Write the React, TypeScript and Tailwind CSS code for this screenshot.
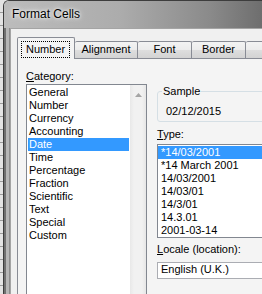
const categories = [
  "General",
  "Number",
  "Currency",
  "Accounting",
  "Date",
  "Time",
  "Percentage",
  "Fraction",
  "Scientific",
  "Text",
  "Special",
  "Custom",
];

const types = [
  "*14/03/2001",
  "*14 March 2001",
  "14/03/2001",
  "14/03/01",
  "14/3/01",
  "14.3.01",
  "2001-03-14",
];

function Tab({ label, w }: { label?: string; w: string }) {
  return (
    <div
      className={`${w} h-[17px] shrink-0 border-t border-r border-[#898c95] rounded-t-[2px] bg-[linear-gradient(#f3f3f3_0%,#ececec_50%,#dedede_50%,#d3d3d3_100%)] pt-[1px] text-center`}
    >
      {label}
    </div>
  );
}

export default function App() {
  return (
    <div className="w-[262px] h-[294px] overflow-hidden flex bg-[#e4e4e4] font-['Liberation_Sans',Arial,sans-serif] text-[11px] leading-[13px] text-black">
      {/* spreadsheet peeking out on the left */}
      <div className="w-[3px] shrink-0 bg-[repeating-linear-gradient(to_bottom,#e3e3e3_0px,#e3e3e3_12px,#9a9a9a_12px,#9a9a9a_13px)]" />

      <div className="flex-1 min-w-0 flex flex-col border-l border-t border-[#3d3d3d] rounded-tl-[6px] overflow-hidden">
        {/* title bar */}
        <div className="h-[27px] shrink-0 pl-[8px] pt-[5px] bg-[linear-gradient(to_right,#bcbcbc_0%,#acacac_45%,#8a8a8a_80%,#6e6e6e_100%)]">
          <span className="text-[12px] leading-[16px] [text-shadow:0_0_6px_#fff,0_0_3px_#fff]">
            Format Cells
          </span>
        </div>

        <div className="flex-1 flex min-h-0">
          {/* window frame */}
          <div className="w-[2px] shrink-0 bg-[#707070]" />
          <div className="w-[3px] shrink-0 bg-[#b6b6b6]" />
          <div className="w-[1px] shrink-0 bg-[#8c8c8c]" />

          {/* client area */}
          <div className="flex-1 min-w-0 border-l border-t border-[#a4a4a4] bg-[#f0f0f0] pt-[8px] pl-[6px] flex flex-col">
            {/* tabs */}
            <div className="flex items-end h-[21px] shrink-0">
              <div className="relative z-10 w-[58px] h-[22px] -mb-px shrink-0 border-l border-t border-r border-[#898c95] rounded-t-[2px] bg-[#f4f4f4] pt-[3px] pl-[3px]">
                <div className="w-[49px] border border-dotted border-black py-[1px] text-center">
                  Number
                </div>
              </div>
              <Tab label="Alignment" w="w-[63px]" />
              <Tab label="Font" w="w-[54px]" />
              <Tab label="Border" w="w-[54px]" />
              <Tab w="w-[60px]" />
            </div>

            {/* tab page */}
            <div className="flex-1 border-t border-l border-[#898c95] bg-[#f4f4f4] pl-[8px] flex gap-[10px]">
              {/* category column */}
              <div className="w-[121px] shrink-0 flex flex-col pt-[11px]">
                <div>
                  <span className="underline">C</span>ategory:
                </div>
                <div className="mt-[1px] h-[260px] flex border border-[#828790] bg-white">
                  <div className="flex-1 p-[1px]">
                    {categories.map((c) => (
                      <div
                        key={c}
                        className={`h-[13px] pl-[1px] ${c === "Date" ? "bg-[#3399ff] text-white" : ""}`}
                      >
                        {c}
                      </div>
                    ))}
                  </div>
                  <div className="w-[16px] shrink-0 bg-[linear-gradient(to_right,#e8e8e8,#f1f1f1_25%,#f1f1f1_75%,#e6e6e6)] flex justify-center pt-[8px]">
                    <svg width="7" height="4" viewBox="0 0 7 4">
                      <polygon points="0,4 3.5,0 7,4" fill="#a5a5a5" />
                    </svg>
                  </div>
                </div>
              </div>

              {/* right column */}
              <div className="w-[150px] shrink-0 flex flex-col pt-[32px]">
                <div className="relative h-[31px] border border-[#d5dfe5] rounded-[3px] pl-[8px] pt-[13px]">
                  <span className="absolute left-[4px] top-[-7px] px-px bg-[#f4f4f4]">
                    Sample
                  </span>
                  02/12/2015
                </div>

                <div className="mt-[6px]">
                  <span className="underline">T</span>ype:
                </div>
                <div className="mt-[3px] border border-[#828790] bg-white pt-[1px]">
                  {types.map((t, i) => (
                    <div
                      key={t}
                      className={`h-[13px] pl-[3px] ${i === 0 ? "bg-[#3399ff] text-white" : ""}`}
                    >
                      {t}
                    </div>
                  ))}
                </div>

                <div className="mt-[5px]">
                  <span className="underline">L</span>ocale (location):
                </div>
                <div className="mt-[6px] h-[17px] border border-[#abadb3] bg-white pl-[3px]">
                  English (U.K.)
                </div>
              </div>
            </div>
          </div>
        </div>
      </div>
    </div>
  );
}
